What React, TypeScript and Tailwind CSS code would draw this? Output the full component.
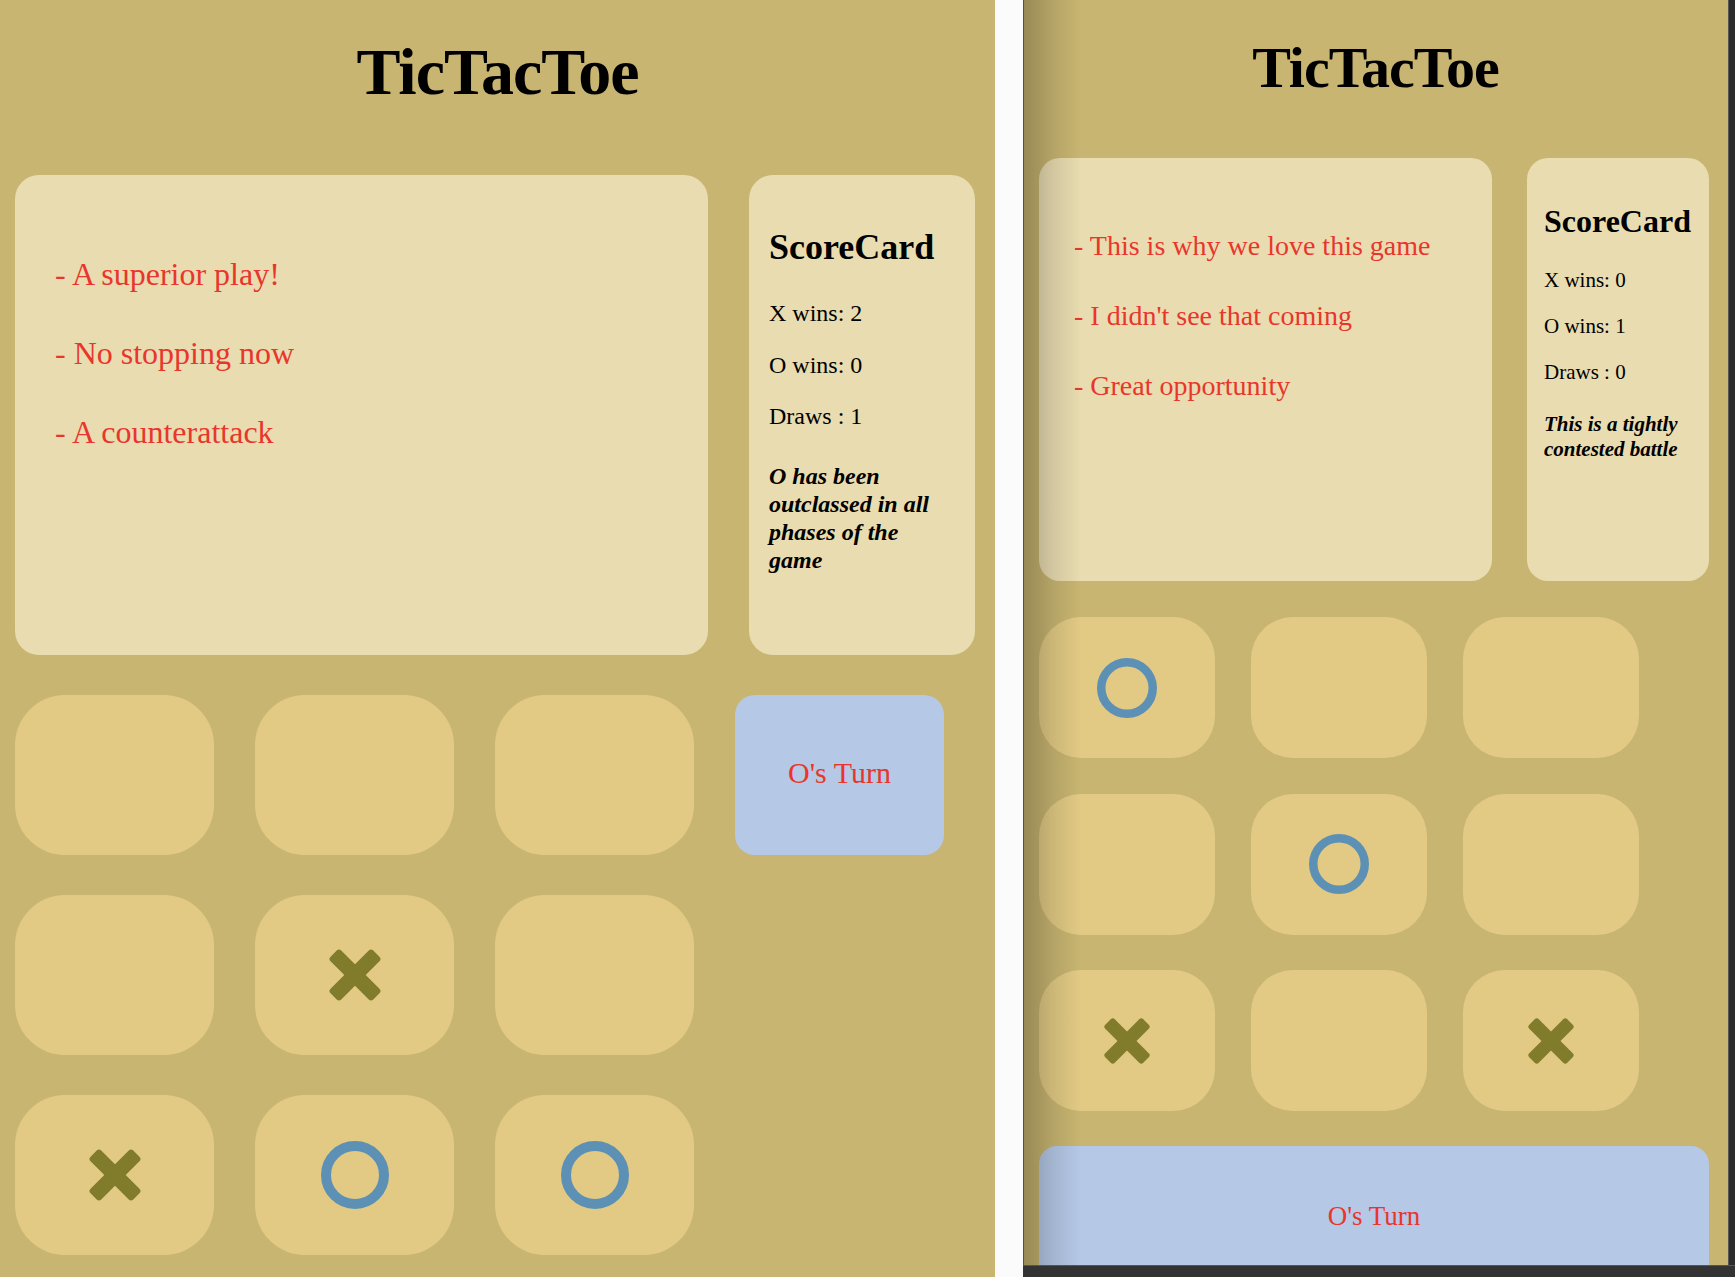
import React from 'react';

type Mark = 'X' | 'O' | '';

const serif = { fontFamily: '"Liberation Serif", "Times New Roman", serif' };

function XMark({ size }: { size: number }) {
  return (
    <svg width={size} height={size} viewBox="0 0 100 100">
      <g fill="#817c2b">
        <rect x="-6" y="36" width="112" height="28" rx="6" transform="rotate(45 50 50)" />
        <rect x="-6" y="36" width="112" height="28" rx="6" transform="rotate(-45 50 50)" />
      </g>
    </svg>
  );
}

function OMark({ size, stroke }: { size: number; stroke: number }) {
  const r = (size - stroke) / 2;
  return (
    <svg width={size} height={size} viewBox={`0 0 ${size} ${size}`}>
      <circle cx={size / 2} cy={size / 2} r={r} fill="none" stroke="#5d90b5" strokeWidth={stroke} />
    </svg>
  );
}

const leftBoard: Mark[] = ['', '', '', '', 'X', '', 'X', 'O', 'O'];
const rightBoard: Mark[] = ['O', '', '', '', 'O', '', 'X', '', 'X'];

function LeftCell({ mark }: { mark: Mark }) {
  return (
    <div className="rounded-[50px] bg-[#e2ca84] flex items-center justify-center">
      {mark === 'X' && <XMark size={54} />}
      {mark === 'O' && <OMark size={68} stroke={10} />}
    </div>
  );
}

function RightCell({ mark }: { mark: Mark }) {
  return (
    <div className="rounded-[42px] bg-[#e2ca84] flex items-center justify-center">
      {mark === 'X' && <XMark size={48} />}
      {mark === 'O' && <OMark size={60} stroke={8.5} />}
    </div>
  );
}

function LeftPanel() {
  return (
    <div className="w-[995px] h-[1277px] shrink-0 bg-[#c8b571] text-black" style={serif}>
      <h1 className="pt-[34px] text-center text-[66px] leading-[76px] font-bold tracking-[-1px]">
        TicTacToe
      </h1>
      <div className="mt-[65px] pl-[15px] flex gap-[41px]">
        <div className="w-[693px] h-[480px] rounded-[24px] bg-[#e8dcb0] pl-[40px] pt-[82px] flex flex-col gap-[45px] text-[32px] leading-[34px] text-[#e8362c]">
          <p>- A superior play!</p>
          <p>- No stopping now</p>
          <p>- A counterattack</p>
        </div>
        <div className="w-[226px] h-[480px] rounded-[24px] bg-[#e8dcb0] pl-[20px] pr-[32px] pt-[51px]">
          <h2 className="text-[36px] leading-[42px] font-bold">ScoreCard</h2>
          <div className="mt-[31px] flex flex-col gap-[23.5px] text-[24px] leading-[28px]">
            <p>X wins: 2</p>
            <p>O wins: 0</p>
            <p>Draws : 1</p>
          </div>
          <p className="mt-[32px] text-[24px] leading-[28px] font-bold italic">
            O has been outclassed in all phases of the game
          </p>
        </div>
      </div>
      <div className="mt-[40px] pl-[15px] grid grid-cols-[199px_199px_199px_209px] grid-rows-[160px_160px_160px] gap-x-[41px] gap-y-[40px]">
        {leftBoard.slice(0, 3).map((m, i) => (
          <LeftCell key={i} mark={m} />
        ))}
        <div className="rounded-[20px] bg-[#b5c8e6] flex items-center justify-center pb-[6px] text-[30px] text-[#e8362c]">
          O's Turn
        </div>
        {leftBoard.slice(3, 6).map((m, i) => (
          <LeftCell key={i} mark={m} />
        ))}
        <div />
        {leftBoard.slice(6, 9).map((m, i) => (
          <LeftCell key={i} mark={m} />
        ))}
      </div>
    </div>
  );
}

function RightPanel() {
  return (
    <div className="relative w-[705px] h-[1265px] overflow-hidden bg-[#c8b571] text-black" style={serif}>
      <h1 className="pt-[34px] text-center text-[58px] leading-[67px] font-bold tracking-[-1px]">
        TicTacToe
      </h1>
      <div className="mt-[57px] pl-[16px] flex gap-[35px]">
        <div className="w-[453px] h-[423px] rounded-[21px] bg-[#e8dcb0] pl-[35px] pt-[73px] flex flex-col gap-[40px] text-[28px] leading-[30px] text-[#e8362c]">
          <p>- This is why we love this game</p>
          <p>- I didn't see that coming</p>
          <p>- Great opportunity</p>
        </div>
        <div className="w-[182px] h-[423px] rounded-[21px] bg-[#e8dcb0] pl-[17px] pr-[14px] pt-[45px]">
          <h2 className="text-[32px] leading-[37px] font-bold">ScoreCard</h2>
          <div className="mt-[28px] flex flex-col gap-[21px] text-[21px] leading-[25px]">
            <p>X wins: 0</p>
            <p>O wins: 1</p>
            <p>Draws : 0</p>
          </div>
          <p className="mt-[27px] text-[21px] leading-[24.5px] font-bold italic">
            This is a tightly contested battle
          </p>
        </div>
      </div>
      <div className="mt-[36px] pl-[16px] grid grid-cols-[176px_176px_176px] grid-rows-[141px_141px_141px] gap-x-[36px] gap-y-[35.5px]">
        {rightBoard.map((m, i) => (
          <RightCell key={i} mark={m} />
        ))}
      </div>
      <div className="mt-[35px] ml-[16px] w-[670px] h-[141px] rounded-[18px] bg-[#b5c8e6] flex items-center justify-center text-[27px] text-[#e8362c]">
        O's Turn
      </div>
      <div className="pointer-events-none absolute inset-y-0 left-0 w-[58px] bg-gradient-to-r from-black/25 via-black/10 to-transparent" />
      <div className="pointer-events-none absolute inset-y-0 left-0 w-px bg-black/40" />
    </div>
  );
}

export default function App() {
  return (
    <div className="flex w-[1735px] h-[1277px] overflow-hidden bg-white">
      <LeftPanel />
      <div className="w-[28px] shrink-0 bg-[#fbfbfb]" />
      <div className="flex flex-col w-[712px] shrink-0">
        <div className="flex">
          <RightPanel />
          <div className="w-[7px] h-[1265px] bg-[#2c2c2c] border-l border-[#555]" />
        </div>
        <div className="h-[12px] bg-[#333333] border-t border-[#555]" />
      </div>
    </div>
  );
}
